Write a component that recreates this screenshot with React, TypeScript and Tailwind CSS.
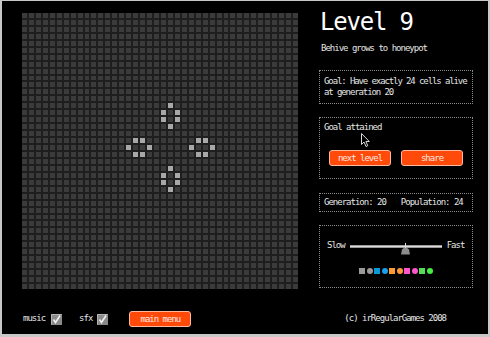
import React from "react";

// live cells of the board, "row,col"
const LIVE = new Set([
  "13,21", "14,20", "14,22", "15,20", "15,22", "16,21",
  "18,16", "18,17", "19,15", "19,18", "20,16", "20,17",
  "18,25", "18,26", "19,24", "19,27", "20,25", "20,26",
  "22,21", "23,20", "23,22", "24,20", "24,22", "25,21",
]);

const SWATCHES = [
  { color: "bg-[#9a9a9a]", round: false },
  { color: "bg-[#9a9a9a]", round: true },
  { color: "bg-[#0a9ad8]", round: false },
  { color: "bg-[#1aa0ea]", round: true },
  { color: "bg-[#ff9933]", round: false },
  { color: "bg-[#ff9933]", round: true },
  { color: "bg-[#ff55cc]", round: false },
  { color: "bg-[#ff55cc]", round: true },
  { color: "bg-[#55dd55]", round: false },
  { color: "bg-[#44ee44]", round: true },
];

const Board = () => {
  const cells = [];
  for (let r = 0; r < 40; r++) {
    for (let c = 0; c < 40; c++) {
      const alive = LIVE.has(`${r},${c}`);
      cells.push(
        <div key={`${r}-${c}`} className={alive ? "bg-[#a8a8a8]" : "bg-[#3b3b3b]"} />
      );
    }
  }
  return (
    <div className="mt-[5px] w-[276px] h-[276px] grid grid-cols-[repeat(40,1fr)] grid-rows-[repeat(40,1fr)] gap-[2px] bg-[#1e1e1e]">
      {cells}
    </div>
  );
};

const Check = () => (
  <svg width="11" height="11" viewBox="0 0 11 11">
    <rect x="0" y="0" width="11" height="11" fill="#8a8a8a" />
    <path d="M0.5 10.5 V0.5 H10.5" stroke="#b5b5b5" fill="none" />
    <path d="M2.5 5.5 L4.5 8.5 L9 1.5" stroke="#f0f0f0" strokeWidth="1.6" fill="none" />
  </svg>
);

const OrangeButton = ({ label }: { label: string }) => (
  <button className="w-[62px] h-[16px] rounded-[3px] bg-[#ff4a0a] border border-[#ffb8a0] text-[#ffe8e0] leading-none">
    {label}
  </button>
);

export default function App() {
  return (
    <div className="relative w-[490px] h-[337px] overflow-hidden bg-black border-t border-x-2 border-b-[3px] border-[#c8c8c8] font-['DejaVu_Sans_Mono',monospace] text-[9px] tracking-[-1px] text-[#e6e6e6] flex flex-col">
      <div className="flex items-start pl-[20px] pt-[7px]">
        <Board />

        {/* right side panel */}
        <div className="ml-[21px] w-[154px] flex flex-col">
          <h1 className="pl-[1px] text-[24px] leading-[28px] tracking-[-1.2px] text-white">Level 9</h1>
          <p className="mt-[6px] pl-[2px] leading-[12px]">Behive grows to honeypot</p>

          <div className="mt-[16px] border border-dotted border-[#8a8a8a] pl-[4px] pr-0 pt-[5px] pb-[5px] leading-[11px] tracking-[-1.1px]">
            Goal: Have exactly 24 cells alive at generation 20
          </div>

          <div className="mt-[13px] border border-dotted border-[#8a8a8a] pt-[4px] pb-[12px]">
            <p className="px-[4px] leading-[11px]">Goal attained</p>
            <div className="mt-[17px] flex justify-center gap-[10px]">
              <OrangeButton label="next level" />
              <OrangeButton label="share" />
            </div>
          </div>

          <div className="mt-[14px] border border-dotted border-[#8a8a8a] px-[4px] py-[3px] leading-[11px] flex gap-[15px]">
            <span>Generation: 20</span>
            <span>Population: 24</span>
          </div>

          <div className="mt-[13px] border border-dotted border-[#8a8a8a] pt-[14px] pb-[13px]">
            <div className="h-[12px] flex items-center pl-[7px]">
              <span>Slow</span>
              <div className="relative ml-[5px] w-[92px] h-[3px] bg-[#dcdcdc] border-y border-[#9a9a9a]">
                <svg className="absolute left-[50px] top-[-3px]" width="11" height="12" viewBox="0 0 11 12">
                  <path d="M1 11.5 L2 6.5 Q5.5 2.5 9 6.5 L10 11.5 Z" fill="#8c8c8c" />
                  <path d="M5.5 0 V5" stroke="#e0e0e0" strokeWidth="1" />
                </svg>
              </div>
              <span className="ml-[5px]">Fast</span>
            </div>
            <div className="mt-[16px] flex justify-center gap-[1.5px]">
              {SWATCHES.map((s, i) => (
                <div key={i} className={`w-[6px] h-[6px] ${s.color} ${s.round ? "rounded-full" : ""}`} />
              ))}
            </div>
          </div>
        </div>
      </div>

      {/* bottom bar */}
      <div className="mt-[22px] h-[16px] flex items-center pl-[21px]">
        <span>music</span>
        <span className="ml-[6px] flex"><Check /></span>
        <span className="ml-[17px]">sfx</span>
        <span className="ml-[5px] flex"><Check /></span>
        <span className="ml-[21px] flex"><OrangeButton label="main menu" /></span>
        <span className="ml-[153px]">(c) irRegularGames 2008</span>
      </div>

      {/* mouse pointer */}
      <svg className="absolute left-[359px] top-[132px]" width="10" height="15" viewBox="0 0 10 15">
        <path d="M0.5 0.5 L0.5 11.5 L3 9 L5 13.5 L6.8 12.7 L4.9 8.5 L8.3 8.5 Z" fill="#000" stroke="#d8d8d8" strokeWidth="1" />
      </svg>
    </div>
  );
}
